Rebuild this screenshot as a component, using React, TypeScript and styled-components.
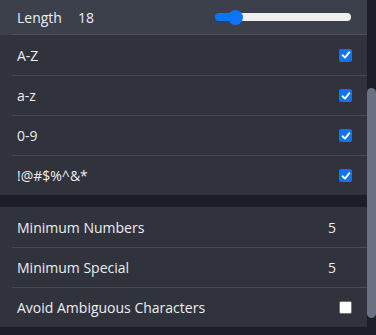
import React, { useState } from 'react';
import styled, { createGlobalStyle } from 'styled-components';

const GlobalStyle = createGlobalStyle`
  html, body {
    margin: 0;
    padding: 0;
    background: #1b1e26;
  }
  body {
    font-family: 'Open Sans', 'Liberation Sans', sans-serif;
  }
`;

const Page = styled.div`
  display: flex;
  width: 376px;
  height: 335px;
  overflow: hidden;
  background: #1b1e26;
`;

const Main = styled.div`
  flex: 1;
  display: flex;
  flex-direction: column;
`;

const Card = styled.div`
  background: #30333c;
  display: flex;
  flex-direction: column;
`;

const Gap = styled.div`
  height: 12px;
`;

const TopRow = styled.div`
  background: #3c404b;
  height: 35px;
  display: flex;
  flex-direction: column;
`;

const TopInner = styled.div`
  flex: 1;
  display: flex;
  align-items: center;
  padding-left: 17px;
  padding-right: 16px;
`;

const TopLine = styled.div`
  margin-left: 12px;
  height: 1px;
  background: #4a4e59;
`;

const Row = styled.div<{ $first?: boolean }>`
  margin-left: 12px;
  height: 40px;
  box-sizing: border-box;
  border-top: ${({ $first }) => ($first ? 'none' : '1px solid #464a55')};
  display: flex;
  align-items: center;
  padding-left: 5px;
  padding-right: 15px;
`;

const Label = styled.span`
  color: #eceef2;
  font-size: 14px;
  flex: 1;
`;

const LengthLabel = styled.span`
  color: #eceef2;
  font-size: 14px;
`;

const LengthValue = styled.span`
  color: #eceef2;
  font-size: 14px;
  margin-left: 16px;
  flex: 1;
`;

const Value = styled.span`
  color: #eceef2;
  font-size: 14px;
  margin-right: 16px;
`;

const Slider = styled.input`
  -webkit-appearance: none;
  appearance: none;
  width: 136px;
  height: 8px;
  margin: 0;
  border-radius: 4px;
  outline: none;
  cursor: pointer;

  &::-webkit-slider-thumb {
    -webkit-appearance: none;
    appearance: none;
    width: 15px;
    height: 15px;
    border-radius: 50%;
    background: #0b75f5;
    border: none;
  }
`;

const Box = styled.span<{ $checked: boolean }>`
  width: 13px;
  height: 13px;
  box-sizing: border-box;
  border-radius: 2px;
  background: ${({ $checked }) => ($checked ? '#0b75f5' : '#ffffff')};
  border: ${({ $checked }) => ($checked ? 'none' : '1px solid #767676')};
  display: flex;
  align-items: center;
  justify-content: center;
  cursor: pointer;
`;

const Scrollbar = styled.div`
  width: 9px;
  background: #1b1e26;
  display: flex;
  flex-direction: column;
`;

const Thumb = styled.div`
  margin-top: 88px;
  height: 230px;
  background: #6b7181;
  border-radius: 5px;
`;

const Check: React.FC<{ checked: boolean; onToggle: () => void }> = ({ checked, onToggle }) => (
  <Box $checked={checked} onClick={onToggle}>
    {checked && (
      <svg width="10" height="10" viewBox="0 0 10 10">
        <path d="M1.6 5.3 L4 7.6 L8.4 2.2" fill="none" stroke="#fff" strokeWidth="1.9" strokeLinecap="round" strokeLinejoin="round" />
      </svg>
    )}
  </Box>
);

export default function App() {
  const [length, setLength] = useState(18);
  const [sets, setSets] = useState({ upper: true, lower: true, digits: true, special: true });
  const [avoid, setAvoid] = useState(false);

  const min = 8;
  const max = 100;
  const pct = ((length - min) / (max - min)) * 100;

  const toggle = (k: keyof typeof sets) => setSets((s) => ({ ...s, [k]: !s[k] }));

  return (
    <Page>
      <GlobalStyle />
      <Main>
        <Card>
          <TopRow>
            <TopInner>
              <LengthLabel>Length</LengthLabel>
              <LengthValue>{length}</LengthValue>
              <Slider
                type="range"
                min={min}
                max={max}
                value={length}
                onChange={(e) => setLength(Number(e.target.value))}
                style={{
                  background: `linear-gradient(to right, #0b75f5 0%, #0b75f5 ${pct}%, #efefef ${pct}%, #efefef 100%)`,
                }}
              />
            </TopInner>
            <TopLine />
          </TopRow>
          <Row $first>
            <Label>A-Z</Label>
            <Check checked={sets.upper} onToggle={() => toggle('upper')} />
          </Row>
          <Row>
            <Label>a-z</Label>
            <Check checked={sets.lower} onToggle={() => toggle('lower')} />
          </Row>
          <Row>
            <Label>0-9</Label>
            <Check checked={sets.digits} onToggle={() => toggle('digits')} />
          </Row>
          <Row>
            <Label>!@#$%^&amp;*</Label>
            <Check checked={sets.special} onToggle={() => toggle('special')} />
          </Row>
        </Card>
        <Gap />
        <Card>
          <Row $first>
            <Label>Minimum Numbers</Label>
            <Value>5</Value>
          </Row>
          <Row>
            <Label>Minimum Special</Label>
            <Value>5</Value>
          </Row>
          <Row>
            <Label>Avoid Ambiguous Characters</Label>
            <Check checked={avoid} onToggle={() => setAvoid((a) => !a)} />
          </Row>
        </Card>
      </Main>
      <Scrollbar>
        <Thumb />
      </Scrollbar>
    </Page>
  );
}
